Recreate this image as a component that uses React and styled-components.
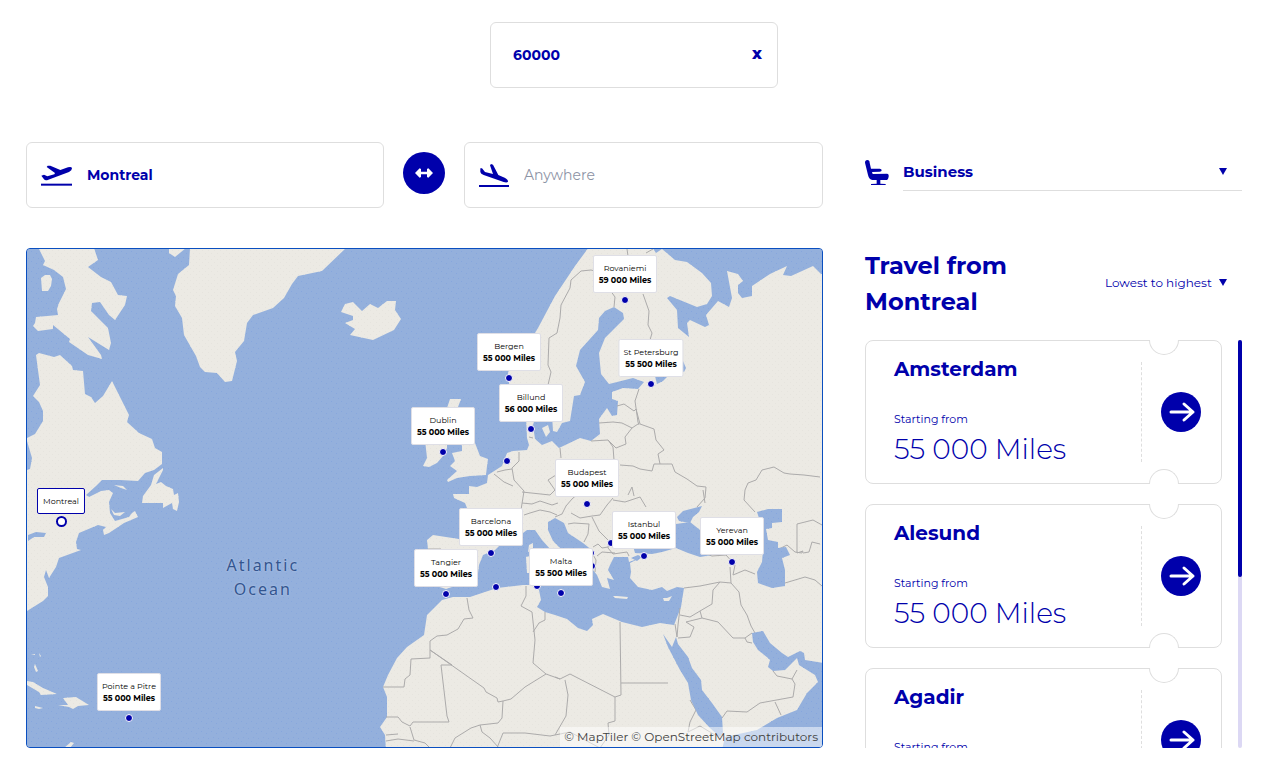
import { useState } from "react";
import styled, { createGlobalStyle } from "styled-components";

const GlobalStyle = createGlobalStyle`
  * { box-sizing: border-box; }
  body {
    margin: 0;
    background: #fff;
    color: #0000ab;
    font-family: Montserrat, Inter, "Liberation Sans", sans-serif;
  }
  button, input, select {
    font-family: inherit;
    color: inherit;
  }
`;

const Page = styled.main`
  padding: 22px 20px 13px 26px;
`;
const Budget = styled.div`
  display: flex;
  align-items: center;
  width: 288px;
  height: 66px;
  margin: 0 auto 54px;
  padding: 0 15px 0 22px;
  border: 1px solid #dedede;
  border-radius: 6px;
`;
const BudgetInput = styled.input`
  flex: 1;
  min-width: 0;
  padding: 0;
  border: 0;
  outline: 0;
  background: none;
  font-size: 14px;
  font-weight: 700;
`;
const ClearButton = styled.button`
  padding: 0 0 2px;
  border: 0;
  background: none;
  font-size: 16px;
  line-height: 20px;
  font-weight: 800;
  cursor: pointer;
`;
const Columns = styled.div`
  display: grid;
  grid-template-columns: 797fr 377fr;
  gap: 40px 42px;
`;
const Route = styled.div`
  display: grid;
  grid-template-columns: 358fr 42px 359fr;
  gap: 19px;
`;
const Place = styled.label`
  display: flex;
  align-items: center;
  gap: 15px;
  height: 66px;
  padding: 0 14px;
  border: 1px solid #dedede;
  border-radius: 6px;
`;
const PlaceInput = styled.input`
  flex: 1;
  min-width: 0;
  padding: 0;
  border: 0;
  outline: 0;
  background: none;
  font-size: 14px;
  font-weight: 700;
  &::placeholder {
    color: #8d93a5;
    font-weight: 400;
    opacity: 1;
  }
`;
const RoundButton = styled.button`
  display: flex;
  align-items: center;
  justify-content: center;
  width: ${(p) => p.$size}px;
  height: ${(p) => p.$size}px;
  padding: 0;
  border: 0;
  border-radius: 50%;
  background: #0000ab;
  cursor: pointer;
`;
const SwapSlot = styled.div`
  padding-top: 10px;
`;
const Cabin = styled.label`
  display: flex;
  align-items: center;
  align-self: start;
  gap: 14px;
  padding-top: 12px;
`;
const Dropdown = styled.span`
  display: flex;
  align-items: center;
  flex: ${(p) => (p.$wide ? 1 : "none")};
  gap: 7px;
  height: 37px;
  padding: 0 15px 2px 0;
  border-bottom: 1px solid ${(p) => (p.$wide ? "#dedede" : "transparent")};
`;
const Select = styled.select`
  flex: 1;
  padding: 0;
  border: 0;
  outline: 0;
  background: none;
  appearance: none;
  font-size: ${(p) => (p.$strong ? 15 : 12)}px;
  font-weight: ${(p) => (p.$strong ? 700 : 400)};
  cursor: pointer;
`;

const MapBox = styled.section`
  position: relative;
  height: 500px;
  overflow: hidden;
  border: 1px solid #0a4fc0;
  border-radius: 4px;
  background: #94b0dc;
`;
const MapSvg = styled.svg`
  display: block;
  width: 100%;
  height: 100%;
`;
const OceanName = styled.p`
  position: absolute;
  left: 24%;
  top: 304px;
  width: 90px;
  margin: 0;
  color: #33558f;
  font-family: "Noto Sans", sans-serif;
  font-size: 16px;
  line-height: 24px;
  letter-spacing: 2px;
  text-align: center;
  text-shadow: 0 0 2px #c3d3ee;
`;
const Pin = styled.div`
  position: absolute;
  width: 0;
  height: 0;
`;
const Dot = styled.span`
  position: absolute;
  left: -4px;
  top: -4px;
  width: 8px;
  height: 8px;
  border: 1px solid #fff;
  border-radius: 50%;
  background: #0000ab;
`;
const HomeDot = styled(Dot)`
  left: -5px;
  top: -5px;
  width: 11px;
  height: 11px;
  border: 2px solid #0000ab;
  background: #fff;
`;
const Tag = styled.button`
  position: absolute;
  bottom: 7px;
  left: 0;
  min-width: ${(p) => (p.$home ? 48 : 64)}px;
  padding: ${(p) => (p.$home ? "6px 5px" : "6px 4px")};
  transform: translateX(-50%);
  border: 1px solid ${(p) => (p.$home ? "#0000ab" : "#dfdfe6")};
  border-radius: 2px;
  background: #fff;
  color: #000;
  font-size: 8px;
  line-height: 12px;
  white-space: nowrap;
  cursor: pointer;
  strong {
    display: block;
    font-weight: 700;
  }
`;
const Credits = styled.div`
  position: absolute;
  right: 0;
  bottom: 0;
  padding: 0 4px;
  background: rgba(255, 255, 255, 0.5);
  color: #404040;
  font-size: 12px;
  line-height: 20px;
  a {
    color: inherit;
    text-decoration: none;
  }
`;

const Results = styled.section`
  display: flex;
  flex-direction: column;
  height: 500px;
`;
const ResultsHead = styled.div`
  display: flex;
  align-items: center;
  justify-content: space-between;
  height: 72px;
  margin-bottom: 20px;
`;
const Heading = styled.h1`
  width: 180px;
  margin: 0;
  font-size: 24px;
  line-height: 36px;
  font-weight: 700;
`;
const Scroller = styled.div`
  display: flex;
  flex: 1;
  gap: 16px;
  min-height: 0;
`;
const List = styled.ul`
  display: flex;
  flex: 1;
  flex-direction: column;
  gap: 20px;
  margin: 0;
  padding: 0;
  overflow-y: auto;
  scrollbar-width: none;
  list-style: none;
`;
const Track = styled.div`
  width: 4px;
  border-radius: 2px;
  background: #dcd8f4;
`;
const Thumb = styled.div`
  height: 58%;
  border-radius: 2px;
  background: #0000ab;
`;
const Card = styled.li`
  position: relative;
  display: flex;
  flex: none;
  height: 144px;
  padding-left: 28px;
  border: 1px solid #dedede;
  border-radius: 8px;
`;
const Notch = styled.span`
  position: absolute;
  right: 42px;
  ${(p) => p.$side}: -1px;
  width: 30px;
  height: 15px;
  border: 1px solid #dedede;
  border-${(p) => p.$side}: 0;
  border-radius: ${(p) => (p.$side === "top" ? "0 0 15px 15px" : "15px 15px 0 0")};
  background: #fff;
`;
const CardBody = styled.div`
  flex: 1;
  padding-top: 14px;
`;
const City = styled.h2`
  margin: 0 0 28px;
  font-size: 20px;
  line-height: 28px;
  font-weight: 700;
`;
const Small = styled.p`
  margin: 0;
  font-size: 11px;
  line-height: 16px;
`;
const Price = styled.p`
  margin: 2px 0 0;
  font-size: 28px;
  line-height: 40px;
  font-weight: 300;
`;
const CardAction = styled.div`
  display: flex;
  align-items: center;
  justify-content: center;
  width: 80px;
  margin: 21px 0;
  padding-right: 1px;
  border-left: 1px dashed #dedede;
`;

const places = [
  { x: 507, y: 461 },
  { x: 496, y: 587 },
  { x: 537, y: 586 },
  { x: 591, y: 553 },
  { x: 592, y: 566 },
  { x: 611, y: 543 },
  { x: 625, y: 300, name: "Rovaniemi", miles: "59 000" },
  { x: 509, y: 378, name: "Bergen", miles: "55 000" },
  { x: 651, y: 384, name: "St Petersburg", miles: "55 500" },
  { x: 531, y: 429, name: "Billund", miles: "56 000" },
  { x: 443, y: 452, name: "Dublin", miles: "55 000" },
  { x: 587, y: 504, name: "Budapest", miles: "55 000" },
  { x: 491, y: 553, name: "Barcelona", miles: "55 000" },
  { x: 644, y: 556, name: "Istanbul", miles: "55 000" },
  { x: 732, y: 562, name: "Yerevan", miles: "55 000" },
  { x: 446, y: 594, name: "Tangier", miles: "55 000" },
  { x: 561, y: 593, name: "Malta", miles: "55 500" },
  { x: 129, y: 718, name: "Pointe a Pitre", miles: "55 000" },
];

const offers = [
  { city: "Amsterdam", miles: "55 000" },
  { city: "Alesund", miles: "55 000" },
  { city: "Agadir", miles: "55 000" },
];

const land = [
  // Baffin and its neighbours
  "39,249 45,261 43,265 54,270 63,277 66,289 59,303 57,309 58,315 36,317 35,323 33,326 38,331 53,329 53,325 70,339 69,342 88,355 102,359 101,355 88,337 109,350 111,343 108,328 91,311 92,303 100,302 109,315 115,320 125,305 127,296 118,295 111,282 101,277 88,267 98,260 94,248",
  "41,278 45,275 50,275 52,279 51,286 48,291 42,291",
  // North America
  "27,438 35,434 43,421 43,411 39,402 33,396 40,385 36,355 39,353 54,357 60,355 72,366 73,370 83,371 85,394 91,397 95,403 103,396 112,381 129,415 127,422 139,433 152,439 155,448 162,452 162,464 154,470 145,473 138,481 120,480 102,480 96,486 86,495 89,497 101,491 109,490 113,493 109,502 110,513 115,521 129,517 132,513 135,511 138,517 124,523 109,533 104,535 103,530 106,527 98,525 79,533 76,542 77,549 81,550 59,558 56,567 49,578 46,570 44,577 48,587 48,596 43,601 27,611 20,611 20,438",
  "114,485 123,486 127,490 121,488",
  "111,509 115,513 125,512 120,516 114,515",
  "163,468 154,475 151,485 143,496 142,503 163,503 163,508 172,503 173,509 177,511 179,502 178,493 174,495 173,489 166,486 161,482 156,484 163,470",
  // Greenland
  "190,248 189,265 178,274 173,290 176,296 175,306 182,318 184,335 196,356 200,367 205,372 217,373 225,382 232,381 237,361 235,352 244,341 247,323 253,315 273,308 284,298 292,284 298,276 322,271 346,248",
  "169,248 169,253 175,257 186,248",
  // Iceland
  "341,312 345,304 353,302 362,311 370,304 378,308 387,301 396,301 395,310 401,319 394,330 373,340 350,335 355,329 345,323 353,320 353,316",
  // Ireland and Great Britain
  "425,440 447,440 447,448 443,456 437,463 429,467 423,466 427,458",
  "450,399 461,399 458,407 468,412 475,443 480,456 488,459 487,466 486,475 470,476 457,478 448,482 447,480 457,471 450,466 455,461 452,453 462,451 462,446 455,430 447,408",
  // Europe, Asia and Africa round the Mediterranean
  "589,247 575,266 555,296 538,328 535,333 515,350 508,373 510,392 525,400 540,398 552,415 553,431 557,432 562,423 570,421 574,396 580,395 585,382 576,366 580,350 598,330 599,318 605,311 614,307 623,313 624,319 605,338 599,353 601,374 609,384 633,378 644,382 638,389 623,388 612,392 612,399 618,401 617,415 612,416 607,408 599,419 600,434 591,441 580,438 559,448 552,441 542,445 535,439 533,425 536,415 526,416 527,438 529,445 527,450 513,451 507,453 502,466 488,475 487,483 477,487 469,486 469,494 453,494 454,498 465,503 467,508 474,520 470,539 459,539 433,535 427,540 428,549 425,575 432,585 443,588 446,589 455,586 470,583 478,573 479,565 483,555 495,550 505,540 523,533 527,530 535,530 542,540 551,550 566,562 570,575 576,570 573,560 565,553 553,541 548,530 548,522 555,518 564,523 568,533 583,543 593,551 593,570 597,575 602,587 610,589 607,578 614,580 608,570 610,565 614,557 628,557 629,562 640,558 630,563 631,572 630,578 638,587 652,590 662,587 667,591 677,587 684,588 681,607 674,625 660,623 642,627 622,622 603,614 592,619 593,625 587,631 578,628 567,619 555,615 545,612 537,607 541,600 539,590 535,585 523,585 497,588 470,597 453,597 442,600 427,615 424,635 407,647 397,658 388,675 383,687 387,697 387,717 380,727 385,735 386,750 830,750 830,274 821,274 813,266 802,271 791,276 783,275 787,266 770,274 752,286 752,296 742,298 738,293 738,285 743,281 738,274 727,271 732,298 729,307 718,301 706,315 709,325 705,327 690,320 687,323 689,337 678,328 677,310 667,298 670,296 697,307 707,304 712,296 711,283 702,273 687,262 675,260 662,249 656,253 652,247",
  "542,428 548,425 550,432 546,437",
  "529,545 533,543 533,550 528,552",
  "526,557 530,556 530,573 527,573",
  // Caribbean
  "27,681 33,682 43,688 57,694 41,695 39,692 27,685",
  "58,705 68,705 63,698 76,697 89,705 78,706 73,709 69,707",
  "35,706 43,708 39,709 35,708",
  "35,664 38,671 36,672 34,667",
  "31,655 35,654 35,655",
  "39,653 41,656 40,657",
  "64,748 71,742 74,743 70,748",
];

const water = [
  "27,441 32,458 30,469 27,470",
  "28,535 36,532 46,533 44,537 34,537 28,541",
  // Ladoga and the end of the gulf
  "683,361 686,368 684,372 680,370",
  "655,376 668,376 663,381 657,384",
  // Black Sea and Azov
  "640,520 655,513 661,513 676,524 690,522 700,530 712,545 712,555 700,557 688,553 676,548 662,552 652,554 635,553 630,535",
  "677,517 683,511 702,506 699,512 693,517 690,523 679,521",
  "631,558 638,555 642,557 637,561",
  // Caspian
  "757,512 768,509 782,509 782,522 772,523 772,528 766,529 768,540 778,542 778,548 786,547 790,555 782,558 785,570 785,586 772,588 758,583 757,572 762,562 763,550 763,528 759,518",
  // Red Sea
  "663,634 672,647 676,637 678,644 688,657 692,668 701,680 702,690 712,703 722,717 723,733 720,737 710,728 698,715 691,700 688,683 680,670 668,647",
  // Persian Gulf and Arabian Sea
  "752,633 763,631 770,643 782,653 788,657 800,651 804,653 805,660 830,664 830,750 722,750 725,737 757,730 777,718 797,710 807,693 818,682 815,675 799,665 797,658 785,670 773,671 768,667 770,660 768,658 758,650 753,642",
];

const isles = [
  "613,596 617,596 628,597 627,599 615,598",
  "663,598 667,598 672,596 669,601 664,601",
];

const borders = [
  // Scandinavia
  "591,270 581,271 571,280 570,288 561,305 560,318 557,333 549,338 548,365 551,372 548,385",
  "627,249 628,256",
  "653,249 646,253",
  "614,307 615,297 610,290 606,274 591,270",
  "643,294 649,311 648,325 652,333 650,340",
  // Baltic states
  "639,389 635,401 638,422 639,425",
  "617,406 624,404 634,411 636,409 640,424 654,429 656,440 664,450 658,454 660,464",
  "599,423 613,422 622,423 632,428 638,424",
  "632,428 625,437 626,444 616,448 608,440 591,441",
  "608,440 613,447 614,460",
  "560,448 561,458",
  "620,465 633,466 640,469 652,471 654,464 672,464 675,472 687,479 697,486 706,487 705,498 697,507",
  // Central Europe
  "529,437 533,438",
  "519,452 519,461 512,468 514,480 524,491 521,510",
  "494,474 504,482 513,486",
  "512,469 505,470 497,472",
  "556,475 548,480 555,490 550,495 522,492",
  "522,503 532,504 540,501 552,505 558,503",
  "524,515 530,513 540,510 550,512 557,515",
  "555,517 562,514 566,506 572,499 580,492",
  "571,513 580,518 592,516 600,515 607,505 613,498",
  "613,500 625,502 640,497 646,507",
  "568,524 574,523 589,524 588,534 584,542",
  "592,517 599,531 609,541 608,548 613,554 627,552 629,556",
  "593,547 598,544 602,548 608,547",
  "597,556 602,552 615,553",
  "591,551 596,560 595,572",
  "634,496 632,487 628,495",
  "428,549 441,549 442,565 434,580",
  // Russia and the steppe
  "745,490 748,483 756,480 762,470 774,467 784,473 790,474 804,475 820,477",
  "745,490 744,500 755,512",
  "703,490 705,503",
  "777,550 787,545 795,552 802,553 803,551 797,553 797,524 813,520 822,525",
  "803,553 809,552 812,542 820,544",
  "785,583 805,577 815,580 822,586",
  // Near East
  "700,552 712,556 726,555 735,565 733,575 745,570 755,574",
  "684,588 700,586 720,582 731,583 730,567",
  "731,583 739,592 741,605 747,615 751,626 755,633",
  "720,582 713,590 712,604 700,611 690,617 680,615",
  "700,611 702,618 686,622 694,627 690,637 678,638",
  "702,618 718,622 733,638 745,638 752,633",
  "745,638 747,642 752,643",
  "677,637 678,625 680,608",
  "675,624 677,637",
  "773,671 777,676 792,679 797,670",
  "792,679 795,684 793,697 760,703 747,712 727,711 722,718",
  "775,702 781,715",
  // Africa
  "620,622 621,695 615,697 615,721 608,723 609,735 600,748",
  "621,683 668,683",
  "615,697 570,674 560,679 555,677",
  "565,680 568,695 566,716 555,735",
  "467,598 469,610 473,618 464,619 458,629 447,635 437,636 430,641 430,658 411,659 410,675 405,679 404,687 383,687",
  "430,650 484,688 486,692 497,698 498,702 503,701 511,699 525,687 546,674 533,663 535,640 532,612 521,606 526,596 526,586",
  "430,650 452,665",
  "545,612 545,620 539,623 533,632",
  "546,674 560,679",
  "503,701 502,718 498,723 480,725 471,728 455,738 450,748",
  "452,665 441,665 447,716 449,722 413,722 410,726 402,722 398,717 386,717",
  "410,727 414,740 425,743 430,748",
  "386,735 398,734",
  "386,741 398,739 414,741",
  "480,725 482,732 490,738 499,748",
  "497,748 503,733 525,733 550,736 570,732 600,748",
  "690,700 696,710 690,722 688,732 700,726 715,735",
];

const left = (x) => `${((x - 27) / 795) * 100}%`;
const top = (y) => `${((y - 249) / 498) * 100}%`;

function TakeoffIcon() {
  return (
    <svg width="31" height="21" viewBox="0 0 93 63" fill="#0000ab" aria-hidden="true">
      <path d="M1 32 L9 29 L19 34 L40 28 L42 24 L17 6 L20 2 L28 2 L58 15 L81 7 Q92 4 93 10 Q93 16 84 21 L22 44 Q13 48 9 43 Z" />
      <path d="M0 56h93v6H0z" />
    </svg>
  );
}

function LandingIcon() {
  return (
    <svg width="30" height="23" viewBox="0 0 90 69" fill="#0000ab" aria-hidden="true">
      <path d="M4 13 L9 13 L18 24 L42 30 L33 4 L36 0 L42 2 L58 33 L77 41 Q88 47 87 53 Q84 57 74 54 L14 33 Q5 30 4 24 Z" />
      <path d="M0 63h90v6H0z" />
    </svg>
  );
}

function SeatIcon() {
  return (
    <svg width="24" height="25" viewBox="0 0 72 75" fill="#0000ab" aria-hidden="true">
      <path d="M0 8 Q0 0 7 0 Q14 0 14 8 L18 26 L44 26 Q50 26 50 31 Q50 35 44 35 L21 36 L23 42 L66 41 Q72 41 71 50 Q70 57 66 60 L46 60 L46 71 L62 72 L62 75 L18 75 L18 72 L35 71 L35 60 L22 60 Q12 58 9 45 Z" />
    </svg>
  );
}

function Caret() {
  return (
    <svg width="8" height="7" viewBox="0 0 8 7" fill="#0000ab" aria-hidden="true">
      <path d="M0 0h8L4 7z" />
    </svg>
  );
}

function WorldMap() {
  return (
    <MapSvg viewBox="27 249 795 498" preserveAspectRatio="none" aria-hidden="true">
      <defs>
        <pattern id="seaDots" width="10" height="10" patternUnits="userSpaceOnUse">
          <path d="M1 1h1v1h-1zM6 3h1v1h-1zM3 7h1v1h-1zM8 8h1v1h-1z" fill="#86a6de" />
        </pattern>
        <pattern id="landDots" width="6" height="6" patternUnits="userSpaceOnUse">
          <path d="M1 1h1v1h-1zM4 4h1v1h-1z" fill="#e6e4de" />
        </pattern>
      </defs>
      <rect x="27" y="249" width="795" height="498" fill="#94b0dc" />
      <rect x="27" y="249" width="795" height="498" fill="url(#seaDots)" />
      {land.map((points) => (
        <g key={points}>
          <polygon points={points} fill="#eceae4" />
          <polygon points={points} fill="url(#landDots)" />
        </g>
      ))}
      {borders.map((points) => (
        <polyline key={points} points={points} fill="none" stroke="#acabab" strokeWidth="1" />
      ))}
      {water.map((points) => (
        <g key={points}>
          <polygon points={points} fill="#94b0dc" />
          <polygon points={points} fill="url(#seaDots)" />
        </g>
      ))}
      {isles.map((points) => (
        <polygon key={points} points={points} fill="#eceae4" />
      ))}
    </MapSvg>
  );
}

function App() {
  const [budget, setBudget] = useState("60000");
  const [from, setFrom] = useState("Montreal");
  const [to, setTo] = useState("");

  const swap = () => {
    setFrom(to);
    setTo(from);
  };

  return (
    <>
      <GlobalStyle />
      <Page>
        <Budget>
          <BudgetInput
            aria-label="Miles"
            value={budget}
            onChange={(e) => setBudget(e.target.value)}
          />
          <ClearButton onClick={() => setBudget("")}>x</ClearButton>
        </Budget>

        <Columns>
          <Route>
            <Place>
              <TakeoffIcon />
              <PlaceInput aria-label="From" value={from} onChange={(e) => setFrom(e.target.value)} />
            </Place>
            <SwapSlot>
              <RoundButton $size={42} aria-label="Swap" onClick={swap}>
                <svg width="18" height="10" viewBox="0 0 54 30" fill="#fff">
                  <path d="M0 15 L14 1 L18 3 V11 H36 V3 L40 1 L54 15 L40 29 L36 27 V19 H18 V27 L14 29 Z" />
                </svg>
              </RoundButton>
            </SwapSlot>
            <Place>
              <LandingIcon />
              <PlaceInput
                aria-label="To"
                placeholder="Anywhere"
                value={to}
                onChange={(e) => setTo(e.target.value)}
              />
            </Place>
          </Route>

          <Cabin>
            <SeatIcon />
            <Dropdown $wide>
              <Select $strong aria-label="Cabin">
                <option>Business</option>
                <option>Economy</option>
              </Select>
              <Caret />
            </Dropdown>
          </Cabin>

          <MapBox>
            <WorldMap />
            <OceanName>Atlantic Ocean</OceanName>
            {places.map((place) => (
              <Pin key={place.x} style={{ left: left(place.x), top: top(place.y) }}>
                <Dot />
                {place.name && (
                  <Tag>
                    {place.name}
                    <strong>{place.miles} Miles</strong>
                  </Tag>
                )}
              </Pin>
            ))}
            <Pin style={{ left: left(61), top: top(521) }}>
              <HomeDot />
              <Tag $home>Montreal</Tag>
            </Pin>
            <Credits>
              <a href="#maptiler">© MapTiler</a> <a href="#osm">© OpenStreetMap contributors</a>
            </Credits>
          </MapBox>

          <Results>
            <ResultsHead>
              <Heading>Travel from Montreal</Heading>
              <Dropdown as="label">
                <Select aria-label="Sort">
                  <option>Lowest to highest</option>
                  <option>Highest to lowest</option>
                </Select>
                <Caret />
              </Dropdown>
            </ResultsHead>
            <Scroller>
              <List>
                {offers.map((offer) => (
                  <Card key={offer.city}>
                    <Notch $side="top" />
                    <Notch $side="bottom" />
                    <CardBody>
                      <City>{offer.city}</City>
                      <Small>Starting from</Small>
                      <Price>{offer.miles} Miles</Price>
                    </CardBody>
                    <CardAction>
                      <RoundButton $size={40} aria-label={offer.city}>
                        <svg width="40" height="40" viewBox="0 0 40 40" fill="none">
                          <path
                            d="M10 20h22M23 12l9 8-9 8"
                            stroke="#fff"
                            strokeWidth="3"
                            strokeLinecap="round"
                            strokeLinejoin="round"
                          />
                        </svg>
                      </RoundButton>
                    </CardAction>
                  </Card>
                ))}
              </List>
              <Track>
                <Thumb />
              </Track>
            </Scroller>
          </Results>
        </Columns>
      </Page>
    </>
  );
}

export default App;
